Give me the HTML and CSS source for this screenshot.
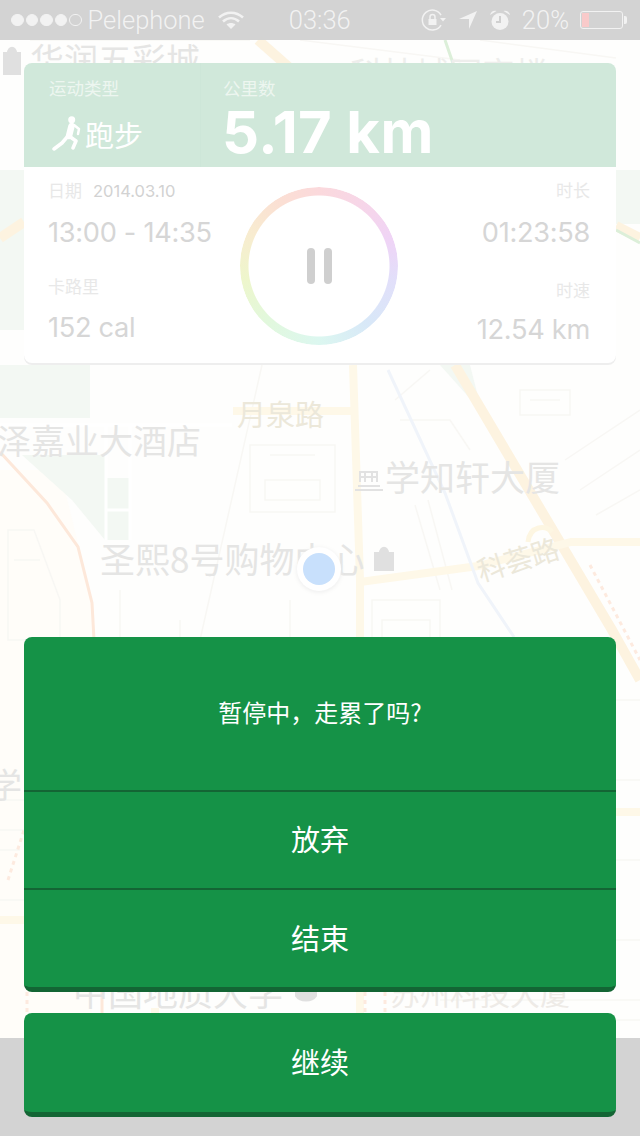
FILE: index.html
```html
<!DOCTYPE html>
<html lang="zh-CN">

<head>
    <title>跑步</title>
    <meta charset="UTF-8">
    <meta name="viewport" content="width=device-width, initial-scale=1">
    <link rel="stylesheet" href="styles.css">
</head>

<body>
    <div class="phone">
        <!-- map behind everything -->
        <svg class="map" viewBox="0 0 640 1136" width="640" height="1136">
            <path class="warm" d="M0 470H60L92 600V1038H0Z" />
            <path class="park" d="M0 170H24V330H0Z" />
            <path class="park" d="M0 365H90V418H0Z" />
            <path class="park" d="M22 455H106V478H130V540H105L72 500Z" />
            <path class="park" d="M440 365H470L482 412Z" />
            <path class="park" d="M616 170H640V224H616Z" />
            <g class="blocks">
                <path d="M250 445H335V512H250ZM265 480H320V500H265ZM270 455H315" />
                <path d="M520 390H570V415H520ZM530 400H560" />
                <path d="M565 460L640 410M580 490L640 450M596 515L640 490" />
                <path d="M415 505L440 590M428 500L452 590" />
                <path d="M372 600H440V690H372ZM382 620H430V660H382Z" />
                <path d="M8 530H34L60 600V640H8ZM14 560H40" />
                <path d="M120 590V640M180 620V640M290 600V640" />
                <path d="M0 800H24M0 830H24M0 850H20M0 900H24M616 700H640M616 780H640M616 860H640M616 940H640M590 1000H640M590 1020H640" />
                <path d="M200 640L262 365" />
                <path d="M400 420H450L470 450M395 400L430 370" />
                <path d="M440 1000H590M440 1020H590" />
                <path d="M30 40H250M300 40L460 60M480 40L616 58" />
            </g>
            <g class="road-line">
                <path d="M0 425H232M106 425V540M130 425V540M130 510H106" />
            </g>
            <g class="road">
                <path d="M258 40L292 70" />
                <path d="M455 365L612 630L640 680" />
                <path d="M0 238L24 222" />
                <path d="M616 226L640 238" />
            </g>
            <g class="road-thin">
                <path d="M353 365L360 580V1038" />
                <path d="M233 411H352" />
                <path d="M360 582L478 566L571 542H640" />
                <path d="M0 920H24M616 812H640" />
                <path d="M155 1008V1040" />
            </g>
            <path class="road-round" d="M528 542C530 525 546 525 552 532" />
            <path class="road-blue" d="M388 370L445 493L478 583L514 637" />
            <path class="road-orange" d="M0 452L47 503L78 547L92 603L94 640M102 992V1040" />
            <path class="road-dots" d="M590 565L640 660M8 880L24 830M27 992V1040M365 992V1040M385 992V1040" />
            <path class="road-green" d="M445 40L456 72M616 230L640 243" />

            <text class="label" x="-3" y="454" font-size="34">泽嘉业大酒店</text>
            <text class="label" x="385" y="491" font-size="35">学知轩大厦</text>
            <text class="label" x="100" y="573" font-size="35">圣熙8号购物中心</text>
            <text class="label" x="30" y="73" font-size="34">华润五彩城</text>
            <text class="label label-far" x="350" y="86" font-size="33">科技城写字楼</text>
            <text class="label" x="-12" y="798" font-size="34">学</text>
            <text class="label" x="73" y="1006" font-size="35">中国地质大学</text>
            <text class="label label-warm" x="390" y="1005" font-size="30">苏州科技大厦</text>
            <text class="label-road" x="237" y="426" font-size="29">月泉路</text>
            <text class="label-road" x="0" y="0" font-size="28" transform="translate(481 582) rotate(-17)">科荟路</text>

            <path class="poi" d="M4 53H20V74H4ZM8 53C8 46 16 46 16 53" />
            <path class="poi" d="M375 553H393V570H375ZM380 553C380 546 388 546 388 553" />
            <path class="poi" d="M296 988H316V996C312 1002 300 1002 296 996Z" />
            <path class="poi-line" d="M355 490H383M358 486H380M360 482V472H377V482M365 472V482M372 472V482M360 477H377" />

            <circle class="dot-halo" cx="319" cy="569" r="22" />
            <circle class="dot" cx="319" cy="569" r="16" />
        </svg>
        <div class="band"></div>

        <header class="status">
            <div class="signal"><i></i><i></i><i></i><i></i><i class="off"></i></div>
            <span class="carrier">Pelephone</span>
            <svg class="wifi" width="26" height="20" viewBox="0 0 26 20">
                <path d="M1 7.500C8 1 18 1 25 7.500M5 11.500C10 7 16 7 21 11.500" />
                <path class="wifi-tip" d="M13 19L8.500 14.500C11 12.500 15 12.500 17.500 14.500Z" />
            </svg>
            <span class="clock">03:36</span>
            <div class="status-right">
                <svg class="lock" width="26" height="24" viewBox="0 0 26 24">
                    <path d="M20 17A10 10 0 1 1 20 7" />
                    <path class="fill" d="M19 10H25L22 13.500ZM7.500 11H15.500V17H7.500Z" />
                    <path d="M9 11V9C9 5.800 14 5.800 14 9V11" />
                </svg>
                <svg width="20" height="20" viewBox="0 0 20 20">
                    <path class="fill" d="M19 1L11 19V9H1Z" />
                </svg>
                <svg width="22" height="22" viewBox="0 0 22 22">
                    <circle class="fill" cx="11" cy="12.500" r="8.500" />
                    <path class="fill" d="M1 6C2 2 5 1 7.500 2ZM21 6C20 2 17 1 14.500 2Z" />
                    <path class="hand" d="M11 7V13H7" />
                </svg>
                <span class="percent">20%</span>
                <div class="battery"><div class="battery-level"></div></div>
            </div>
        </header>

        <main class="content">
            <section class="card">
                <div class="card-head">
                    <div class="head-type">
                        <div class="head-label">运动类型</div>
                        <div class="sport">
                            <svg class="runner" width="30" height="36" viewBox="0 0 30 36">
                                <circle cx="19.700" cy="3.700" r="3.500" />
                                <path class="torso" d="M19.500 10L17 20" />
                                <path d="M16 20L10 27L2 33M17 20L24 25L21 32" />
                                <path class="arm" d="M22 9L27 13L26 18" />
                            </svg>
                            跑步
                        </div>
                    </div>
                    <div class="head-distance">
                        <div class="head-label">公里数</div>
                        <div class="distance">5.17 km</div>
                    </div>
                </div>
                <div class="card-body">
                    <div class="col">
                        <div class="stat-label">日期<span class="date">2014.03.10</span></div>
                        <div class="stat-value">13:00 - 14:35</div>
                        <div class="stat-label second">卡路里</div>
                        <div class="stat-value">152 cal</div>
                    </div>
                    <div class="ring">
                        <div class="ring-track"></div>
                        <div class="pause"><i></i><i></i></div>
                    </div>
                    <div class="col col-right">
                        <div class="stat-label">时长</div>
                        <div class="stat-value">01:23:58</div>
                        <div class="stat-label second">时速</div>
                        <div class="stat-value">12.54 km</div>
                    </div>
                </div>
            </section>

            <section class="dialog">
                <div class="dialog-msg">暂停中，走累了吗?</div>
                <button class="dialog-btn">放弃</button>
                <button class="dialog-btn last">结束</button>
            </section>
            <button class="resume">继续</button>
        </main>
    </div>
</body>

</html>
```

FILE: styles.css
```css
body {
    margin: 0;
    background-color: #fefefd;
    font-family: "Noto Sans CJK SC", sans-serif;
}

.phone {
    position: relative;
    isolation: isolate;
    width: 640px;
    height: 1136px;
    overflow: hidden;
}

/* map */
.map {
    position: absolute;
    top: 0;
    left: 0;
    z-index: -1;
    fill: none;
}

.warm {
    fill: #fffdf9;
}

.park {
    fill: #f3f8f3;
}

.blocks path {
    stroke: #f8f7f4;
    stroke-width: 1.500;
}

.road-line path {
    stroke: #ffffff;
    stroke-width: 3;
}

.road path {
    stroke: #fdf3e0;
    stroke-width: 10;
}

.road-thin path {
    stroke: #fef8e8;
    stroke-width: 8;
}

.road-round {
    stroke: #fdf6e2;
    stroke-width: 5;
}

.road-blue {
    stroke: #f0f4fa;
    stroke-width: 3;
}

.road-orange {
    stroke: #fde8da;
    stroke-width: 3;
}

.road-dots {
    stroke: #fdeadf;
    stroke-width: 3;
    stroke-dasharray: 4 4;
}

.road-green {
    stroke: #dcefd9;
    stroke-width: 3;
}

.label {
    fill: #e5e5e4;
    font-family: "Noto Sans CJK SC", sans-serif;
}

.label-far {
    fill: #eeeeec;
}

.label-warm {
    fill: #eeebe7;
}

.label-road {
    fill: #ece8da;
    font-family: "Noto Sans CJK SC", sans-serif;
}

.poi {
    fill: #e0e0e0;
    stroke: #e0e0e0;
    stroke-width: 2;
}

.poi-line {
    stroke: #e2e2e2;
    stroke-width: 2;
}

.dot-halo {
    fill: #ffffff;
    filter: drop-shadow(0 1px 2px #ececec);
}

.dot {
    fill: #c8e0fc;
}

.band {
    position: absolute;
    left: 0;
    bottom: 0;
    z-index: -1;
    width: 100%;
    height: 98px;
    background-color: #d3d3d3;
}

/* status bar */
.status {
    display: flex;
    align-items: center;
    height: 40px;
    padding-left: 11px;
    background-color: rgba(208, 208, 208, 0.94);
    color: #f2f2f2;
    font-family: Roboto, sans-serif;
    font-weight: 300;
    font-size: 25.500px;
}

.status svg {
    fill: none;
    stroke: #f2f2f2;
}

.signal {
    display: flex;
    gap: 2px;
}

.signal i {
    width: 12.500px;
    height: 12.500px;
    border: 1px solid #f2f2f2;
    border-radius: 50%;
    box-sizing: border-box;
    background-color: #f2f2f2;
}

.signal .off {
    background-color: transparent;
}

.carrier {
    margin-left: 6px;
}

.wifi {
    margin-left: 13px;
    stroke-width: 2.500;
}

.status .wifi-tip {
    fill: #f2f2f2;
    stroke: none;
}

.clock {
    margin-left: 45px;
}

.status-right {
    display: flex;
    align-items: center;
    margin-left: auto;
    padding-right: 17px;
    gap: 11px;
}

.status .fill {
    fill: #f2f2f2;
    stroke: none;
}

.status .hand {
    stroke: #d0d0d0;
    stroke-width: 2;
}

.lock {
    stroke-width: 1.500;
}

.battery {
    position: relative;
    width: 43px;
    height: 18px;
    border: 1px solid #f2f2f2;
    border-radius: 3px;
    box-sizing: border-box;
    padding: 1px;
}

.battery::after {
    content: "";
    position: absolute;
    right: -5px;
    top: 4px;
    width: 3px;
    height: 8px;
    background-color: #f2f2f2;
    border-radius: 0 2px 2px 0;
}

.battery-level {
    width: 7px;
    height: 100%;
    background-color: #f9caca;
}

/* content */
.content {
    padding: 23px 24px 0;
}

.card {
    height: 300px;
    border-radius: 8px;
    overflow: hidden;
    background-color: #ffffff;
    box-shadow: 0 2px 0 #eeeeee;
}

.card-head {
    display: flex;
    height: 104px;
    background-color: #d0e8da;
    color: #ffffff;
}

.head-type {
    width: 177px;
    padding: 15px 0 0 25px;
    box-sizing: border-box;
    border-right: 1px solid #cde6d8;
}

.head-distance {
    padding: 15px 0 0 22px;
}

.head-label {
    height: 20px;
    line-height: 20px;
    font-size: 17.500px;
    color: #edf6f0;
}

.sport {
    display: flex;
    align-items: center;
    margin-top: 18px;
    padding-left: 3px;
    font-size: 29px;
    line-height: 36px;
}

.runner {
    margin-right: 3px;
    fill: none;
    stroke: #ffffff;
    stroke-width: 3.500;
    stroke-linecap: round;
    stroke-linejoin: round;
}

.runner circle {
    fill: #ffffff;
    stroke: none;
}

.runner .torso {
    stroke-width: 6.500;
}

.runner .arm {
    stroke-width: 2.500;
}

.distance {
    margin: 3px 0 0 -1px;
    font-family: Inter, sans-serif;
    font-weight: 700;
    font-size: 58px;
    line-height: 62px;
    letter-spacing: 0.400px;
    white-space: nowrap;
}

.card-body {
    display: grid;
    grid-template-columns: 1fr 158px 1fr;
    height: 196px;
    padding: 0 26px 0 24px;
}

.col {
    padding-top: 12px;
}

.col-right {
    text-align: right;
}

.stat-label {
    height: 22px;
    line-height: 22px;
    font-size: 17px;
    color: #e8e8e8;
}

.stat-label.second {
    margin-top: 24px;
}

.col-right .stat-label.second {
    margin-top: 28px;
}

.date {
    margin-left: 11px;
    font-family: Inter, sans-serif;
    font-size: 16.500px;
    color: #d2d2d2;
}

.stat-value {
    margin-top: 14px;
    height: 36px;
    line-height: 36px;
    font-family: Inter, sans-serif;
    font-weight: 400;
    font-size: 27.200px;
    letter-spacing: -0.300px;
    color: #d6d6d6;
    white-space: nowrap;
}

.stat-label.second + .stat-value {
    margin-top: 13px;
}

.col-right .stat-label.second + .stat-value {
    margin-top: 11px;
}

.ring {
    position: relative;
    display: flex;
    align-items: center;
    justify-content: center;
    width: 158px;
    height: 158px;
    margin-top: 20px;
}

.ring-track {
    position: absolute;
    inset: 0;
    border-radius: 50%;
    background: conic-gradient(#fbd9dc, #f5d5ec 45deg, #efd4f6 70deg, #e2dffa 100deg, #d8e8f8 140deg, #dcf7f0 180deg, #e2f8dc 225deg, #eef6cc 260deg, #f8ecd0 295deg, #fbdfd4 330deg, #fbd9dc);
    -webkit-mask: radial-gradient(circle, transparent 70px, #000 71px);
    mask: radial-gradient(circle, transparent 70px, #000 71px);
}

.pause {
    display: flex;
    gap: 9px;
}

.pause i {
    width: 8px;
    height: 36px;
    border-radius: 4px;
    background-color: #cfcfcf;
}

/* dialog */
.dialog {
    margin-top: 274px;
    border-radius: 8px;
    overflow: hidden;
    border-bottom: 5px solid #136534;
    background-color: #159247;
    color: #ffffff;
}

.dialog-msg {
    height: 149px;
    padding-bottom: 4px;
    display: flex;
    align-items: center;
    justify-content: center;
    font-size: 24px;
    border-bottom: 2px solid #136534;
}

.dialog-btn,
.resume {
    display: block;
    width: 100%;
    padding: 0 0 4px;
    border: 0;
    background-color: #159247;
    color: #ffffff;
    font-family: "Noto Sans CJK SC", sans-serif;
    font-size: 29px;
}

.dialog-btn {
    height: 98px;
    border-bottom: 2px solid #136534;
}

.dialog-btn.last {
    height: 97px;
    border-bottom: 0;
}

.resume {
    height: 104px;
    margin-top: 21px;
    border-radius: 8px;
    border-bottom: 5px solid #136534;
}
```
